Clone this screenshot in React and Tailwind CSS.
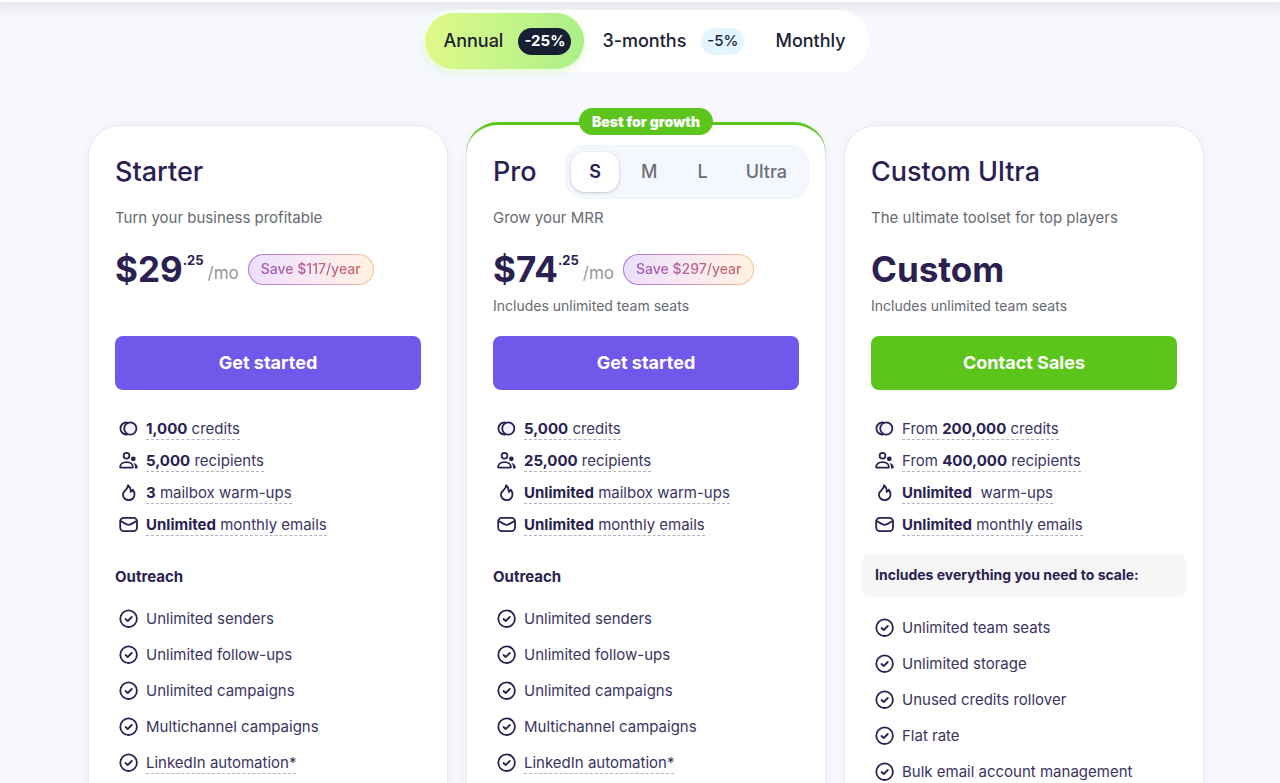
import { useState } from 'react'
import clsx from 'clsx'

const PERIODS = [
  { id: 'annual', label: 'Annual', discount: '-25%' },
  { id: 'quarter', label: '3-months', discount: '-5%' },
  { id: 'monthly', label: 'Monthly' },
]

const SIZES = ['S', 'M', 'L', 'Ultra']

const OUTREACH = [
  { text: 'Unlimited senders' },
  { text: 'Unlimited follow-ups' },
  { text: 'Unlimited campaigns' },
  { text: 'Multichannel campaigns' },
  { text: 'LinkedIn automation*', hint: true },
]

const PLANS = [
  {
    name: 'Starter',
    description: 'Turn your business profitable',
    price: '$29',
    cents: '.25',
    save: 'Save $117/year',
    cta: 'Get started',
    limits: [
      { icon: 'credits', bold: '1,000', after: ' credits' },
      { icon: 'people', bold: '5,000', after: ' recipients' },
      { icon: 'flame', bold: '3', after: ' mailbox warm-ups' },
      { icon: 'mail', bold: 'Unlimited', after: ' monthly emails' },
    ],
    heading: 'Outreach',
    features: OUTREACH,
  },
  {
    name: 'Pro',
    description: 'Grow your MRR',
    price: '$74',
    cents: '.25',
    save: 'Save $297/year',
    note: 'Includes unlimited team seats',
    cta: 'Get started',
    best: true,
    limits: [
      { icon: 'credits', bold: '5,000', after: ' credits' },
      { icon: 'people', bold: '25,000', after: ' recipients' },
      { icon: 'flame', bold: 'Unlimited', after: ' mailbox warm-ups' },
      { icon: 'mail', bold: 'Unlimited', after: ' monthly emails' },
    ],
    heading: 'Outreach',
    features: OUTREACH,
  },
  {
    name: 'Custom Ultra',
    description: 'The ultimate toolset for top players',
    price: 'Custom',
    note: 'Includes unlimited team seats',
    cta: 'Contact Sales',
    sales: true,
    limits: [
      { icon: 'credits', before: 'From ', bold: '200,000', after: ' credits' },
      { icon: 'people', before: 'From ', bold: '400,000', after: ' recipients' },
      { icon: 'flame', bold: 'Unlimited', after: '\u00a0 warm-ups' },
      { icon: 'mail', bold: 'Unlimited', after: ' monthly emails' },
    ],
    banner: 'Includes everything you need to scale:',
    features: [
      { text: 'Unlimited team seats' },
      { text: 'Unlimited storage' },
      { text: 'Unused credits rollover' },
      { text: 'Flat rate' },
      { text: 'Bulk email account management' },
    ],
  },
]

function Icon({ name }) {
  return (
    <svg
      className="w-5 h-5 shrink-0 text-[#2a2150]"
      viewBox="0 0 20 20"
      fill="none"
      stroke="currentColor"
      strokeWidth={1.8}
      strokeLinecap="round"
      strokeLinejoin="round"
      aria-hidden="true"
    >
      {name === 'credits' && (
        <>
          <circle cx="11.3" cy="9.5" r="6.1" fill="#f3f2ff" />
          <path d="M8 3.500H7.400a6 6 0 0 0 0 12H8" />
        </>
      )}
      {name === 'people' && (
        <>
          <circle cx="7.500" cy="4.800" r="2.900" />
          <path d="M1.800 16.700c-.4 0-.7-.3-.7-.7 0-3 2.700-4.900 6.400-4.900s6.400 1.900 6.400 4.900c0 .4-.3.7-.7.7z" />
          <circle cx="14.300" cy="7.800" r="2.400" fill="currentColor" stroke="none" />
          <path d="M14.500 12c2.500.4 4.200 2 4.200 4.200 0 .8-.5 1.300-1.200 1.300h-1.600c.5-2.200-.2-4.100-1.400-5.500z" fill="currentColor" stroke="none" />
        </>
      )}
      {name === 'flame' && (
        <path d="M9 2.200c.3 2.400-1 3.600-2.500 5C5 8.600 3.900 9.600 3.900 11.400a5.800 5.800 0 0 0 11.600 0c0-2-.7-3.500-1.800-4.800-.3 1.300-1 2-2 2.300.2-2.600-.6-5.100-2.700-6.700z" />
      )}
      {name === 'mail' && (
        <>
          <rect x="1.200" y="2.800" width="16.800" height="13.400" rx="3.600" />
          <path d="M1.600 6l5.600 3.100c1.500.9 3.300.9 4.800 0L17.600 6" />
        </>
      )}
      {name === 'check' && (
        <>
          <circle cx="9.600" cy="9.700" r="8.300" />
          <path d="M6.500 10l2.200 2 4.100-4" />
        </>
      )}
    </svg>
  )
}

function PeriodSwitch() {
  const [period, setPeriod] = useState('annual')

  return (
    <div className="flex items-center h-[62px] pl-[2px] pr-[5px] rounded-full bg-white">
      {PERIODS.map(({ id, label, discount }) => {
        const active = id === period
        return (
          <button
            key={id}
            type="button"
            aria-pressed={active}
            onClick={() => setPeriod(id)}
            className={clsx(
              'flex items-center h-14 gap-[15px] rounded-full text-lg font-medium text-[#1b2233] cursor-pointer',
              discount ? 'pl-[18px] pr-[13px]' : 'px-[18px]',
              active && 'bg-linear-to-r from-[#def989] to-[#aaf088] shadow-[0_3px_8px_rgba(170,235,130,0.35)]'
            )}
          >
            {label}
            {discount && (
              <span
                className={clsx(
                  'flex items-center h-[27px] px-[6px] rounded-full text-[15px]',
                  active ? 'bg-[#172033] text-white font-bold' : 'bg-[#e2f5ff]'
                )}
              >
                {discount}
              </span>
            )}
          </button>
        )
      })}
    </div>
  )
}

function SizeSwitch() {
  const [size, setSize] = useState('S')

  return (
    <div className="flex items-center gap-1 h-[54px] px-[5px] rounded-[20px] bg-[#f4f7fe] border border-[#eff4fb]">
      {SIZES.map((item) => (
        <button
          key={item}
          type="button"
          aria-pressed={item === size}
          onClick={() => setSize(item)}
          className={clsx(
            'h-10 rounded-[14px] text-lg font-medium cursor-pointer',
            item === 'Ultra' ? 'px-4' : 'px-[18px]',
            item === size
              ? 'bg-white text-[#2a2150] font-semibold shadow-[0_1px_3px_rgba(40,40,60,0.25)]'
              : 'text-[#6c6f78]'
          )}
        >
          {item}
        </button>
      ))}
    </div>
  )
}

function SaveBadge({ text }) {
  return (
    <span className="rounded-full p-px bg-linear-to-r from-[#a478e0] via-[#dc8fc4] to-[#fbc490]">
      <span className="flex items-center h-[29px] px-3 rounded-full bg-linear-to-r from-[#ecdffc] via-[#f9eaf2] to-[#fff2e2]">
        <span className="text-sm font-medium bg-linear-to-r from-[#a054bd] to-[#cf6660] bg-clip-text text-transparent">
          {text}
        </span>
      </span>
    </span>
  )
}

function PlanCard({ plan }) {
  return (
    <article
      className={clsx(
        'relative flex-1 min-w-0 px-[26px] pb-10 bg-white rounded-t-[32px] border border-[#e6e9f2] shadow-[0_2px_10px_rgba(110,120,190,0.07)]',
        plan.best ? 'pt-[23px] border-t-0' : 'mt-[3px] pt-[19px]'
      )}
    >
      {plan.best && (
        <>
          {/* Green edge that tapers off round the top corners */}
          <div className="absolute top-0 -inset-x-px h-10 rounded-t-[32px] border-t-3 border-[#5bc51b] pointer-events-none" />
          <span className="absolute left-1/2 -top-[14px] -translate-x-1/2 flex items-center h-[27px] px-[13px] rounded-full bg-[#5bc51b] text-white text-sm font-black whitespace-nowrap">
            Best for growth
          </span>
        </>
      )}

      <div className="flex items-center justify-between h-[54px] -mr-[10px]">
        <h2 className="text-[27px] font-medium">{plan.name}</h2>
        {plan.best && <SizeSwitch />}
      </div>
      <p className="mt-[7px] text-[15px] leading-6 text-[#666a72]">{plan.description}</p>

      <div className="flex items-center h-12 mt-[15px]">
        <span className="text-[35px] font-bold">{plan.price}</span>
        {plan.cents && (
          <>
            <span className="self-start mt-[6px] text-[13px] font-bold">{plan.cents}</span>
            <span className="mt-[10px] ml-1 mr-[9px] text-[17px] text-[#94979d]">/mo</span>
            <SaveBadge text={plan.save} />
          </>
        )}
      </div>
      <p className="h-6 mt-px text-sm leading-6 text-[#666a72]">{plan.note}</p>

      <button
        type="button"
        className={clsx(
          'w-full h-[54px] mt-[18px] rounded-lg text-white text-lg font-bold cursor-pointer',
          plan.sales ? 'bg-[#5bc51b]' : 'bg-[#7257eb]'
        )}
      >
        {plan.cta}
      </button>

      <ul className="flex flex-col gap-2 mt-[27px] pl-1 text-[15px] text-[#3b3460]">
        {plan.limits.map((limit) => (
          <li key={limit.icon} className="flex items-center h-6 gap-[7px]">
            <Icon name={limit.icon} />
            <span className="leading-5 whitespace-pre border-b border-dashed border-[#b5b3bd]">
              {limit.before}
              <b className="font-bold text-[#2a2150]">{limit.bold}</b>
              {limit.after}
            </span>
          </li>
        ))}
      </ul>

      {plan.heading && <h3 className="mt-7 mb-[18px] text-[15px] leading-6 font-bold">{plan.heading}</h3>}
      {plan.banner && (
        <p className="-mx-[9px] mt-[17px] mb-[19px] px-[13px] h-[43px] leading-[42px] rounded-lg bg-[#f6f6f6] text-sm font-bold">
          {plan.banner}
        </p>
      )}

      <ul className="flex flex-col gap-3 pl-1 text-[15px] text-[#3b3460]">
        {plan.features.map(({ text, hint }) => (
          <li key={text} className="flex items-center h-6 gap-[7px]">
            <Icon name="check" />
            <span className={clsx('leading-5', hint && 'border-b border-dashed border-[#b5b3bd]')}>
              {text}
            </span>
          </li>
        ))}
      </ul>
    </article>
  )
}

export default function App() {
  return (
    <div className="h-screen overflow-hidden bg-[#f6f8fd] font-['Inter',sans-serif] text-[#2a2150]">
      {/* Bottom edge of the sticky header */}
      <header className="h-[2px] bg-white shadow-[0_2px_10px_4px_rgba(60,60,60,0.1)]" />

      <main className="pl-3">
        <div className="relative flex justify-center pt-2">
          <PeriodSwitch />
        </div>
        <div className="flex items-start gap-[18px] w-full max-w-[1116px] mx-auto mt-[50px]">
          {PLANS.map((plan) => (
            <PlanCard key={plan.name} plan={plan} />
          ))}
        </div>
      </main>
    </div>
  )
}
